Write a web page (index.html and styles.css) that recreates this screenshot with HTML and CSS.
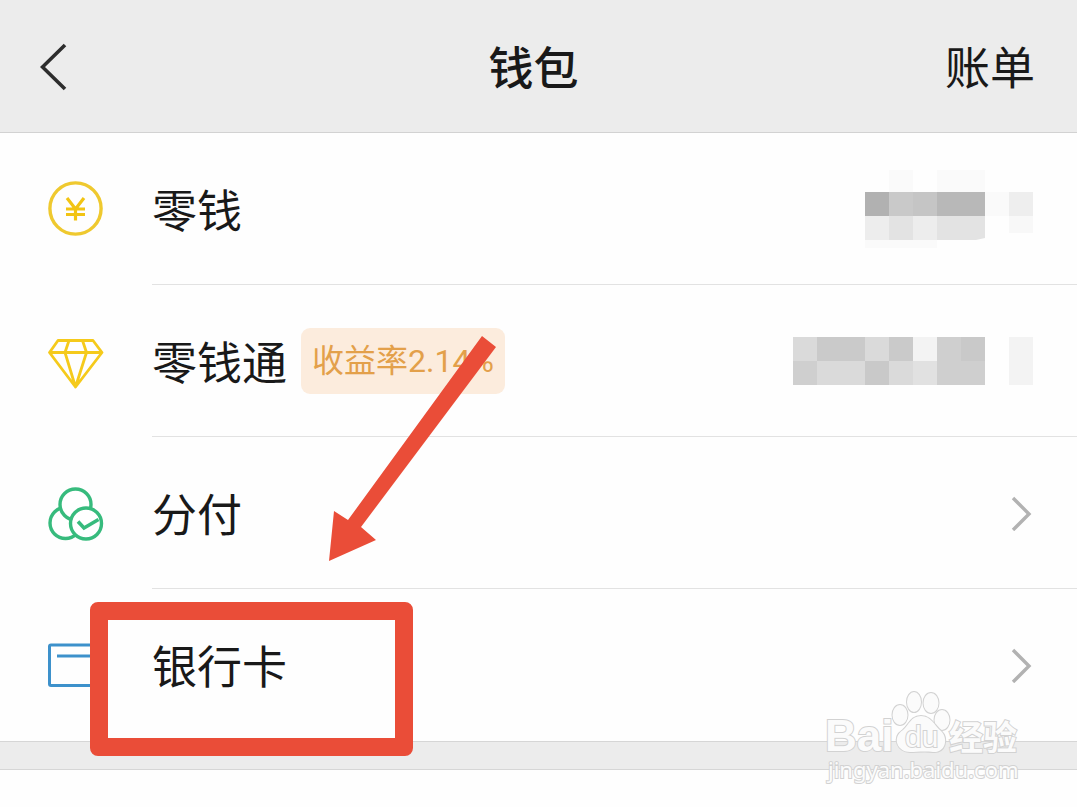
FILE: index.html
```html
<!DOCTYPE html>
<html lang="zh-CN">
<head>
<meta charset="utf-8">
<meta name="viewport" content="width=device-width, initial-scale=1">
<title>钱包</title>
<link rel="stylesheet" href="styles.css">
</head>
<body>
<header class="topbar">
  <button class="back" type="button" aria-label="返回">
    <svg width="28" height="50" viewBox="0 0 28 50"><path d="M25 4 2.500 26 25 48" fill="none" stroke="#2d2d2d" stroke-width="3.600"/></svg>
  </button>
  <h1 class="title">钱包</h1>
  <a class="bill" href="#">账单</a>
</header>
<main class="page">
  <ul class="list">
    <li class="row">
      <svg class="icon" viewBox="0 0 56 56"><circle cx="27.500" cy="27.500" r="25.600" fill="none" stroke="#efc92f" stroke-width="3.400"/><path d="M19 17l8.500 11 8.500-11M18 28h19M18 33.500h19M27.500 27v12.500" fill="none" stroke="#f2c413" stroke-width="3.200"/></svg>
      <a class="item" href="#"><span class="label">零钱</span>
        <svg class="masked" viewBox="0 0 168 94">
          <path fill="#fafafa" d="M24 8h24v22H24zM72 8h48v22H72zM120 30h24v24h-24zM0 78h72v8H0z"/>
          <path fill="#b1b1b1" d="M0 30h24v24H0z"/><path fill="#c9c9c9" d="M24 30h24v24H24z"/><path fill="#c5c5c5" d="M48 30h24v24H48z"/><path fill="#b8b8b8" d="M72 30h48v24H72z"/>
          <path fill="#ededed" d="M0 54h24v24H0zM48 54h24v24H48z"/><path fill="#e3e3e3" d="M24 54h24v24H24zM72 54h48v22l-9 2H72z"/>
          <path fill="#eeeeee" d="M144 30h24v24h-24z"/><path fill="#f8f8f8" d="M144 54h24v17h-24z"/>
        </svg>
      </a>
    </li>
    <li class="row">
      <svg class="icon" viewBox="0 0 56 56"><path d="M10 7.500h35l9 12L27.500 54 1.500 19.500zM1.500 19.500h52.500M21 7.500l-4 12 10.500 34.500 11-34.500-4-12" fill="none" stroke="#f5ca1b" stroke-width="2.800" stroke-linejoin="round"/></svg>
      <a class="item" href="#"><span class="label">零钱通</span><span class="badge">收益率2.14%</span>
        <svg class="masked masked-wide" viewBox="0 0 240 48">
          <path fill="#dadada" d="M0 0h24v24H0zM72 0h24v24H72zM24 24h48v24H24zM96 24h24v24H96z"/><path fill="#cacaca" d="M24 0h48v24H24zM96 0h24v24H96z"/><path fill="#f3f3f3" d="M120 0h24v24h-24z"/>
          <path fill="#cfcfcf" d="M0 24h24v24H0zM144 0h48v48h-48z"/><path fill="#c9c9c9" d="M72 24h24v24H72zM168 0h24v24h-24z"/><path fill="#e1e1e1" d="M120 24h24v24h-24z"/><path fill="#f3f3f3" d="M216 0h24v48h-24z"/>
        </svg>
      </a>
    </li>
    <li class="row">
      <svg class="icon" viewBox="0 0 56 56"><g fill="#fff" stroke="#37bb7d" stroke-width="3.400"><circle cx="17.500" cy="38" r="15.500"/><circle cx="27.500" cy="19.500" r="15.500"/><circle cx="38" cy="38.500" r="15.500"/></g><path d="M30 36.500l6 6.500 14.500-8.500" fill="none" stroke="#37bb7d" stroke-width="3.600"/></svg>
      <a class="item" href="#"><span class="label">分付</span>
        <svg class="chevron" viewBox="0 0 22 36"><path d="M2 3l16 16L2 35" fill="none" stroke="#b2b2b2" stroke-width="3.400"/></svg>
      </a>
    </li>
    <li class="row">
      <svg class="icon" viewBox="0 0 56 56"><rect x="1.500" y="8" width="52" height="40.500" rx="1.500" fill="none" stroke="#3d91cb" stroke-width="3"/><path d="M9 19h37" stroke="#3d91cb" stroke-width="3"/></svg>
      <a class="item" href="#"><span class="label">银行卡</span>
        <svg class="chevron" viewBox="0 0 22 36"><path d="M2 3l16 16L2 35" fill="none" stroke="#b2b2b2" stroke-width="3.400"/></svg>
      </a>
      <span class="highlight"></span>
    </li>
  </ul>
  <div class="divider"></div>
  <svg class="arrow" viewBox="0 0 172 228" aria-hidden="true"><path d="M154 1l14 11L33 192l15 13-47 21 5-50 14 9z" fill="#ea4d38"/></svg>
  <svg class="watermark" viewBox="0 0 200 110" role="img" aria-label="Baidu 经验">
    <g class="mark">
      <text class="mark-latin" x="0" y="61">Bai</text>
      <ellipse cx="75" cy="25" rx="7.500" ry="10"/><ellipse cx="89" cy="12" rx="7" ry="10"/><ellipse cx="106" cy="13" rx="7.500" ry="10"/><ellipse cx="117" cy="30" rx="7.500" ry="10"/>
      <path d="M96 26c-10 0-12 9-18 14-12 8-5 22 7 22 6 0 15-1 23 0 12 1 16-13 8-21-7-6-10-15-20-15z"/>
      <text class="mark-du" x="80" y="57">du</text>
      <text class="mark-cn" x="124" y="60">经验</text>
      <text class="mark-url" x="3" y="88">jingyan.baidu.com</text>
    </g>
  </svg>
</main>
</body>
</html>
```
FILE: styles.css
```css
* { box-sizing: border-box; }
body {
  display: flex;
  flex-direction: column;
  min-height: 100vh;
  margin: 0;
  background: #fefefe;
  color: #191919;
  font-family: "Noto Sans CJK SC", sans-serif;
  font-size: 45px;
  line-height: 60px;
}
a { color: inherit; text-decoration: none; }
svg { display: block; flex: none; }
.topbar {
  display: grid;
  grid-template-columns: 1fr auto 1fr;
  align-items: center;
  padding: 36px 42px 36px 32px;
  border-bottom: 1px solid #d2d2d2;
  background: #ececec;
}
.back { justify-self: start; padding: 0 8px; border: 0; background: none; }
.title { margin: 0; font-size: 45px; font-weight: 500; }
.bill { justify-self: end; }
.page { position: relative; flex: 1; }
.list { margin: 0; padding: 0; list-style: none; }
.row {
  position: relative;
  display: flex;
  align-items: center;
  gap: 48px;
  padding-left: 48px;
}
.icon { width: 56px; height: 56px; }
.item {
  display: flex;
  flex: 1;
  align-items: center;
  height: 152px;
  padding-right: 44px;
  border-bottom: 1px solid #e2e2e2;
}
.row:last-child .item { border-bottom: 0; }
.masked { width: 168px; height: 94px; margin-left: auto; }
.masked-wide { width: 240px; height: 48px; }
.chevron { width: 22px; height: 36px; margin-left: auto; }
.badge {
  margin-left: 14px;
  padding: 3px 11px;
  border-radius: 9px;
  background: #fcecdd;
  color: #e3a04a;
  font-family: Roboto, "Noto Sans CJK SC", sans-serif;
  font-size: 32px;
}
.highlight {
  position: absolute;
  top: 13px;
  left: 90px;
  width: 323px;
  height: 154px;
  border: 18px solid #ea4d38;
  border-radius: 8px;
  pointer-events: none;
  z-index: 1;
}
.divider {
  height: 29px;
  border: solid #d6d6d6;
  border-width: 1px 0;
  background: #ececec;
}
.arrow { position: absolute; top: 202px; left: 328px; width: 172px; height: 228px; }
.watermark { position: absolute; top: 557px; right: 52px; width: 200px; height: 110px; }
.mark { fill: #fbfbfb; stroke: #d2d2d2; stroke-width: 2px; paint-order: stroke; }
.mark-latin { font: bold 44px "Liberation Sans", sans-serif; }
.mark-du { font: 30px "Liberation Sans", sans-serif; }
.mark-cn { font: bold 34px "Noto Sans CJK SC", sans-serif; }
.mark-url { font: 22px "Noto Sans", sans-serif; }
```
